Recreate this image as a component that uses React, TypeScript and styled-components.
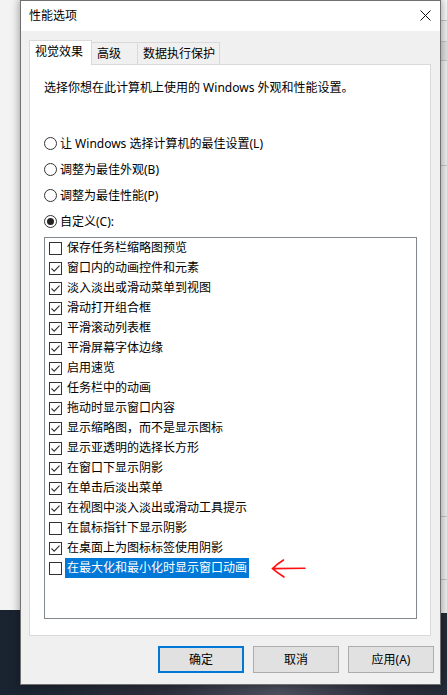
import React from "react";
import styled, { createGlobalStyle } from "styled-components";

const GlobalStyle = createGlobalStyle`
  html, body {
    margin: 0;
    padding: 0;
  }
  body {
    font-family: "Noto Sans", "Noto Sans CJK SC", sans-serif;
    font-size: 12px;
    color: #000;
  }
`;

const Desktop = styled.div`
  position: relative;
  width: 447px;
  height: 695px;
  overflow: hidden;
  background: radial-gradient(ellipse at 62% 100%, #4b4e5d 0%, #2c2f3c 28%, #1a2431 65%, #17222e 100%);
`;

// windows sitting behind the dialog
const BackWindow = styled.div<{ $side: "left" | "right" }>`
  position: absolute;
  top: 0;
  left: ${(p) => (p.$side === "left" ? "0" : "441px")};
  width: ${(p) => (p.$side === "left" ? "20px" : "6px")};
  height: ${(p) => (p.$side === "left" ? "610px" : "613px")};
  background: ${(p) => (p.$side === "left" ? "#f3f3f3" : "#f0f0f0")};
  display: flex;
  flex-direction: column;
`;

const StripBand = styled.div<{ $h: number; $bg?: string }>`
  height: ${(p) => p.$h}px;
  flex: none;
  background: ${(p) => p.$bg || "transparent"};
  border-bottom: 1px solid #c8c8c8;
`;

const Dialog = styled.div`
  position: absolute;
  left: 20px;
  top: 0;
  width: 421px;
  height: 685px;
  box-sizing: border-box;
  border: 1px solid #707070;
  background: #f0f0f0;
  display: flex;
  flex-direction: column;
  box-shadow: 0 0 8px 1px rgba(0, 0, 0, 0.35);
`;

const TitleBar = styled.div`
  height: 30px;
  flex: none;
  background: #fff;
  display: flex;
  align-items: center;
  justify-content: space-between;
`;

const TitleText = styled.span`
  padding-left: 8px;
  line-height: 16px;
  margin-top: -1px;
`;

const CloseButton = styled.div`
  width: 30px;
  height: 30px;
  display: flex;
  align-items: center;
  justify-content: center;
  margin-top: -1px;
`;

const Body = styled.div`
  flex: 1;
  display: flex;
  flex-direction: column;
  padding: 9px 9px 0 8px;
`;

const TabRow = styled.div`
  display: flex;
  align-items: flex-end;
  height: 25px;
  margin-bottom: -1px;
`;

const Tab = styled.div<{ $active?: boolean; $w: number }>`
  box-sizing: border-box;
  width: ${(p) => p.$w}px;
  height: ${(p) => (p.$active ? 25 : 22)}px;
  margin-bottom: ${(p) => (p.$active ? 0 : 1)}px;
  margin-left: -1px;
  &:first-child {
    margin-left: 0;
  }
  padding-left: 5px;
  border: 1px solid #d9d9d9;
  border-bottom: none;
  background: ${(p) => (p.$active ? "#fff" : "#f0f0f0")};
  position: relative;
  z-index: ${(p) => (p.$active ? 1 : 0)};
  display: flex;
  align-items: center;
  line-height: 16px;
  padding-bottom: ${(p) => (p.$active ? 2 : 0)}px;
`;

const Panel = styled.div`
  box-sizing: border-box;
  height: 572px;
  background: #fff;
  border: 1px solid #d9d9d9;
  padding: 15px 14px 0 14px;
  display: flex;
  flex-direction: column;
`;

const Description = styled.div`
  line-height: 16px;
  white-space: nowrap;
`;

const RadioGroup = styled.div`
  margin-top: 37px;
  display: flex;
  flex-direction: column;
  gap: 6px;
`;

const RadioRow = styled.div`
  height: 20px;
  display: flex;
  align-items: center;
  white-space: nowrap;
`;

const RadioCircle = styled.span<{ $checked?: boolean }>`
  box-sizing: border-box;
  width: 13px;
  height: 13px;
  border: 1px solid #333;
  border-radius: 50%;
  background: #fff;
  display: flex;
  align-items: center;
  justify-content: center;
  margin-right: 3px;
  flex: none;
  &::after {
    content: "";
    display: ${(p) => (p.$checked ? "block" : "none")};
    width: 7px;
    height: 7px;
    border-radius: 50%;
    background: #222;
  }
`;

const ListBox = styled.div`
  box-sizing: border-box;
  margin-top: 6px;
  width: 373px;
  height: 382px;
  border: 1px solid #828790;
  background: #fff;
  display: flex;
  flex-direction: column;
`;

const ListRow = styled.div`
  height: 20px;
  flex: none;
  display: flex;
  align-items: center;
  padding-left: 4px;
  white-space: nowrap;
`;

const CheckBox = styled.span`
  box-sizing: border-box;
  width: 13px;
  height: 13px;
  border: 1px solid #333;
  background: #fff;
  flex: none;
  display: flex;
  align-items: center;
  justify-content: center;
`;

const ItemLabel = styled.span<{ $selected?: boolean }>`
  margin-left: 3px;
  padding: 0 2px;
  height: 20px;
  line-height: 20px;
  background: ${(p) => (p.$selected ? "#0078d7" : "transparent")};
  color: ${(p) => (p.$selected ? "#fff" : "#000")};
`;

const ButtonRow = styled.div`
  margin-top: 10px;
  margin-right: -3px;
  display: flex;
  justify-content: flex-end;
  gap: 9px;
`;

const DialogButton = styled.div<{ $default?: boolean }>`
  box-sizing: border-box;
  width: 86px;
  height: 27px;
  background: #e1e1e1;
  border: ${(p) => (p.$default ? "2px solid #0078d7" : "1px solid #adadad")};
  display: flex;
  align-items: center;
  justify-content: center;
  line-height: 16px;
`;

const Annotation = styled.svg`
  position: absolute;
  left: 268px;
  top: 556px;
`;

const items: { label: string; checked: boolean }[] = [
  { label: "保存任务栏缩略图预览", checked: false },
  { label: "窗口内的动画控件和元素", checked: true },
  { label: "淡入淡出或滑动菜单到视图", checked: true },
  { label: "滑动打开组合框", checked: true },
  { label: "平滑滚动列表框", checked: true },
  { label: "平滑屏幕字体边缘", checked: true },
  { label: "启用速览", checked: true },
  { label: "任务栏中的动画", checked: true },
  { label: "拖动时显示窗口内容", checked: true },
  { label: "显示缩略图，而不是显示图标", checked: true },
  { label: "显示亚透明的选择长方形", checked: true },
  { label: "在窗口下显示阴影", checked: true },
  { label: "在单击后淡出菜单", checked: true },
  { label: "在视图中淡入淡出或滑动工具提示", checked: true },
  { label: "在鼠标指针下显示阴影", checked: false },
  { label: "在桌面上为图标标签使用阴影", checked: true },
  { label: "在最大化和最小化时显示窗口动画", checked: false },
];

const radios = [
  { label: "让 Windows 选择计算机的最佳设置(L)", checked: false },
  { label: "调整为最佳外观(B)", checked: false },
  { label: "调整为最佳性能(P)", checked: false },
  { label: "自定义(C):", checked: true },
];

const CheckMark = () => (
  <svg width="11" height="11" viewBox="0 0 11 11">
    <path d="M1.5 5.5 L4.2 8.2 L9.5 2.6" fill="none" stroke="#333" strokeWidth="1.1" />
  </svg>
);

const App = () => {
  return (
    <Desktop>
      <GlobalStyle />
      <BackWindow $side="left" />
      <BackWindow $side="right">
        <StripBand $h={20} $bg="#fafafa" />
        <StripBand $h={20} $bg="#f0f0f0" />
        <StripBand $h={18} $bg="#e2e2e2" />
        <StripBand $h={104} $bg="#f0f0f0" />
        <StripBand $h={350} $bg="#f0f0f0" />
        <StripBand $h={62} $bg="#f0f0f0" />
      </BackWindow>

      <Dialog>
        <TitleBar>
          <TitleText>性能选项</TitleText>
          <CloseButton>
            <svg width="11" height="11" viewBox="0 0 11 11">
              <path d="M0.5 0.5 L10.5 10.5 M10.5 0.5 L0.5 10.5" stroke="#111" strokeWidth="1" />
            </svg>
          </CloseButton>
        </TitleBar>

        <Body>
          <TabRow>
            <Tab $active $w={63}>视觉效果</Tab>
            <Tab $w={47}>高级</Tab>
            <Tab $w={83}>数据执行保护</Tab>
          </TabRow>

          <Panel>
            <Description>选择你想在此计算机上使用的 Windows 外观和性能设置。</Description>

            <RadioGroup>
              {radios.map((r) => (
                <RadioRow key={r.label}>
                  <RadioCircle $checked={r.checked} />
                  {r.label}
                </RadioRow>
              ))}
            </RadioGroup>

            <ListBox>
              {items.map((item, i) => (
                <ListRow key={item.label}>
                  <CheckBox>{item.checked && <CheckMark />}</CheckBox>
                  <ItemLabel $selected={i === items.length - 1}>{item.label}</ItemLabel>
                </ListRow>
              ))}
            </ListBox>
          </Panel>

          <ButtonRow>
            <DialogButton $default>确定</DialogButton>
            <DialogButton>取消</DialogButton>
            <DialogButton>应用(A)</DialogButton>
          </ButtonRow>
        </Body>
      </Dialog>

      <Annotation width="40" height="24" viewBox="0 0 40 24">
        <path
          d="M5 12.6 L37 12.2 M15.5 4 Q9 8 4.5 12.6 Q9 16.5 16 21"
          fill="none"
          stroke="#ff1010"
          strokeWidth="1.6"
          strokeLinecap="round"
        />
      </Annotation>
    </Desktop>
  );
};

export default App;
